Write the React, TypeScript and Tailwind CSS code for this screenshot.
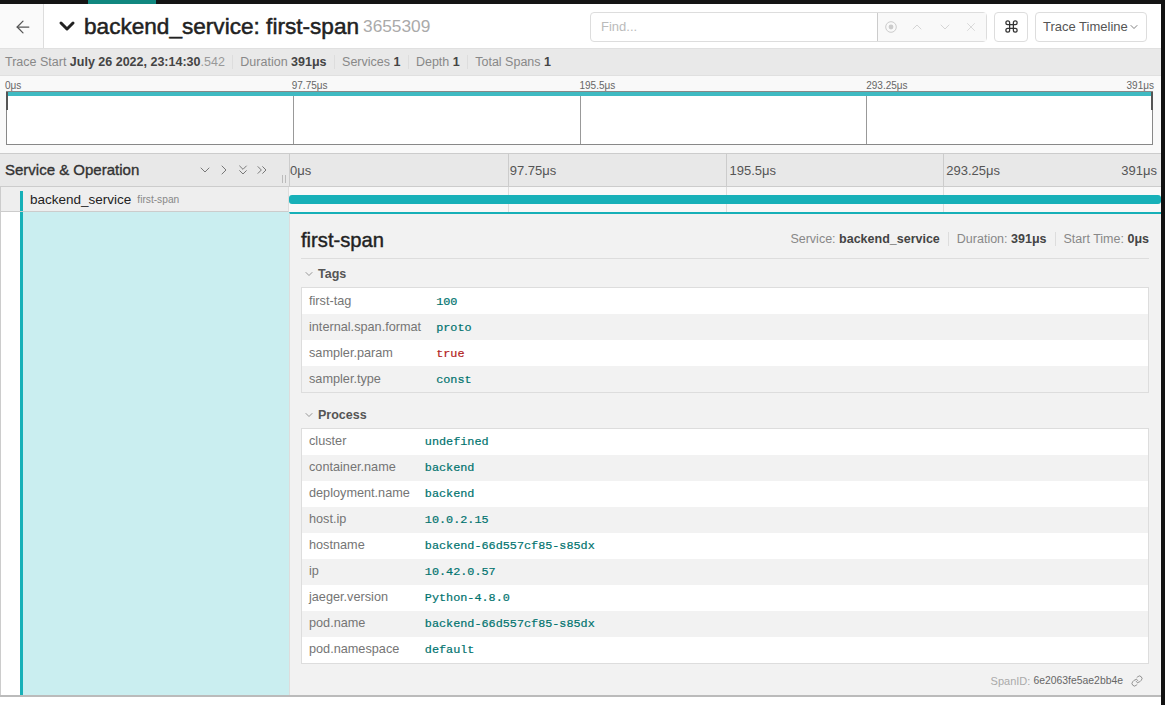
import { ArrowLeft, ChevronDown, ChevronRight, ChevronUp, ChevronsDown, ChevronsRight, Command, Link, X } from "lucide-react";

const tags = [
  { key: "first-tag", value: "100" },
  { key: "internal.span.format", value: "proto" },
  { key: "sampler.param", value: "true", red: true },
  { key: "sampler.type", value: "const" },
];

const process = [
  { key: "cluster", value: "undefined" },
  { key: "container.name", value: "backend" },
  { key: "deployment.name", value: "backend" },
  { key: "host.ip", value: "10.0.2.15" },
  { key: "hostname", value: "backend-66d557cf85-s85dx" },
  { key: "ip", value: "10.42.0.57" },
  { key: "jaeger.version", value: "Python-4.8.0" },
  { key: "pod.name", value: "backend-66d557cf85-s85dx" },
  { key: "pod.namespace", value: "default" },
];

type Row = { key: string; value: string; red?: boolean };

const KeyValues = ({ rows }: { rows: Row[] }) => (
  <div className="border border-[#ddd] bg-white">
    <table className="w-full border-collapse">
      <tbody>
        {rows.map((row, i) => (
          <tr key={row.key} className={`h-[26px] ${i % 2 === 1 ? "bg-[#f2f2f2]" : "bg-white"}`}>
            <td className="w-0 whitespace-nowrap pl-[7px] pr-[15px] text-[12.7px] text-[#757575]">{row.key}</td>
            <td className={`pt-[2px] font-[Liberation_Mono,monospace] text-[11.8px] [-webkit-text-stroke:0.2px] ${row.red ? "text-[#b22222]" : "text-[#00736e]"}`}>
              {row.value}
            </td>
          </tr>
        ))}
      </tbody>
    </table>
  </div>
);

const Stat = ({ label, value, extra, last, tight }: { label: string; value: string; extra?: string; last?: boolean; tight?: boolean }) => (
  <span className={`${last ? "" : tight ? "mr-[7px] border-r border-[#ddd] pr-[7.5px]" : "mr-2 border-r border-[#ddd] pr-2"} leading-[14px]`}>
    <span className="text-[#888]">{label} </span>
    <b className="text-[#444]">{value}</b>
    {extra && <span className="text-[#999]">{extra}</span>}
  </span>
);

const App = () => {
  return (
    <div className="flex h-[705px] w-full overflow-hidden bg-[#111] font-[Liberation_Sans,sans-serif]">
      <div className="flex w-[1161px] flex-col bg-white">
        <div className="h-1 bg-[#151515] pl-[88px]">
          <div className="h-1 w-[68px] bg-[#11877f]" />
        </div>

        <div className="flex h-[44px] items-center">
          <div className="flex h-full w-[44px] items-center justify-center border-r border-[#ddd] bg-[#fafafa] pl-[2px] pt-[1px] text-[#555]">
            <ArrowLeft size={20} strokeWidth={1.5} />
          </div>
          <ChevronDown size={24} strokeWidth={3} className="ml-[11px] text-[#222]" />
          <h1 className="ml-[5px] mt-[2px] text-[22.6px] leading-none text-[#222] [-webkit-text-stroke:0.5px_#222]">backend_service: first-span</h1>
          <span className="ml-[4px] mt-[2px] text-[17.3px] text-[#aaa]">3655309</span>
          <div className="ml-[auto] mt-[1px] flex h-[30px] w-[397px] rounded-[4px] border border-[#ddd]">
            <div className="flex w-[287px] items-center border-r border-[#ccc] pl-[10px] text-[13px] text-[#bbb]">Find...</div>
            <div className="flex flex-1 items-center justify-between bg-[#f9f9f9] pl-[6px] pr-[8px] text-[#ccc]">
              <svg width="14" height="14" viewBox="0 0 14 14" fill="none" stroke="currentColor">
                <circle cx="7" cy="7" r="5.3" />
                <circle cx="7" cy="7" r="2.4" fill="currentColor" stroke="none" />
              </svg>
              <ChevronUp size={16} strokeWidth={1.2} />
              <ChevronDown size={16} strokeWidth={1.2} />
              <X size={14} strokeWidth={1.2} />
            </div>
          </div>
          <div className="ml-[7px] mt-[1px] flex h-[30px] w-[34px] items-center justify-center rounded-[4px] border border-[#ddd] text-[#333]">
            <Command size={15} strokeWidth={2} />
          </div>
          <div className="ml-[7px] mr-[14px] mt-[1px] flex h-[30px] w-[112px] items-center justify-between rounded-[4px] border border-[#ddd] pl-[7px] pr-[6px] text-[13px] text-[#555]">
            Trace Timeline
            <ChevronDown size={12} strokeWidth={1.5} />
          </div>
        </div>

        <div className="flex h-[28px] items-center border-y border-[#e0e0e0] bg-[#e9e9e9] pl-[5px] text-[12.5px]">
          <Stat tight label="Trace Start" value="July 26 2022, 23:14:30" extra=".542" />
          <Stat tight label="Duration" value="391μs" />
          <Stat tight label="Services" value="1" />
          <Stat tight label="Depth" value="1" />
          <Stat tight label="Total Spans" value="1" last />
        </div>

        <div className="h-[77px] bg-[#f9f9f9] pl-[6px] pr-[8px]">
          <div className="grid h-[15px] grid-cols-4 items-center pt-[2px] text-[10px] text-[#666]">
            <span className="-ml-px">0μs</span>
            <span className="-ml-px">97.75μs</span>
            <span>195.5μs</span>
            <span className="flex justify-between">
              293.25μs<span className="mr-[-1px]">391μs</span>
            </span>
          </div>
          <div className="relative h-[54px] border border-[#888] bg-white">
            <div className="h-[4px] bg-[#3fbac2]" />
            <div className="grid h-[48px] grid-cols-4">
              <div />
              <div className="border-l border-[#999]" />
              <div className="border-l border-[#999]" />
              <div className="border-l border-[#999]" />
            </div>
            <div className="absolute -left-px top-0 h-[18px] w-[2px] bg-[#555]" />
            <div className="absolute -right-px top-0 h-[18px] w-[2px] bg-[#555]" />
          </div>
        </div>

        <div className="flex h-[34px] border-y border-[#ccc] bg-[#e8e8e8]">
          <div className="relative flex w-[290px] items-center justify-between border-r border-[#ccc] pl-[5px] pr-[19px]">
            <span className="mt-[1px] text-[15px] text-[#333] [-webkit-text-stroke:0.35px_#333]">Service &amp; Operation</span>
            <div className="flex items-center gap-[3px] text-[#666]">
              <ChevronDown size={16} strokeWidth={1.3} />
              <ChevronRight size={16} strokeWidth={1.3} />
              <ChevronsDown size={16} strokeWidth={1.3} />
              <ChevronsRight size={16} strokeWidth={1.3} />
            </div>
            <div className="absolute bottom-[3px] right-[3px] h-[8px] w-[4px] border-x border-[#bbb]" />
          </div>
          <div className="grid flex-1 grid-cols-4 items-center text-[13px] text-[#555]">
            <span className="h-full leading-[34px]">0μs</span>
            <span className="h-full border-l border-[#ccc] pl-[1px] leading-[34px]">97.75μs</span>
            <span className="h-full border-l border-[#ccc] pl-[3px] leading-[34px]">195.5μs</span>
            <span className="flex h-full justify-between border-l border-[#ccc] pl-[2px] pr-[4px] leading-[34px]">
              293.25μs<span>391μs</span>
            </span>
          </div>
        </div>

        <div className="flex h-[25px]">
          <div className="flex w-[289px] items-stretch border-l border-r border-b border-[#ccc] border-r-[#ddd] bg-[#eee] pl-[19px]">
            <div className="mt-[4px] w-[3px] bg-[#17b0b8]" />
            <span className="ml-[7px] text-[13.5px] leading-[25px] text-[#222]">backend_service</span>
            <span className="ml-[6px] text-[10.2px] leading-[26px] text-[#888]">first-span</span>
          </div>
          <div className="relative flex-1 bg-[#f8f8f8]">
            <div className="ml-px grid h-full grid-cols-4">
              <div />
              <div className="border-l border-[#ddd]" />
              <div className="border-l border-[#ddd]" />
              <div className="border-l border-[#ddd]" />
            </div>
            <div className="absolute left-0 right-0 top-[8px] h-[9px] rounded-[3px] bg-[#17b0b8]" />
          </div>
        </div>

        <div className="flex h-[485px] border-b-2 border-[#bbb]">
          <div className="flex w-[289px] border-l border-[#ccc] pl-[19px]">
            <div className="w-[3px] bg-[#17b0b8]" />
            <div className="flex-1 bg-[#caeef0]" />
          </div>
          <div className="flex flex-1 flex-col border-t-2 border-l border-t-[#17b0b8] border-l-[#ddd] bg-[#f2f2f2] pl-[11px] pr-[12px]">
            <div className="flex h-[45px] shrink-0 items-end justify-between border-b border-[#ddd] pb-[6px]">
              <h2 className="text-[20.2px] leading-[24px] text-[#222] [-webkit-text-stroke:0.4px_#222]">first-span</h2>
              <div className="flex items-center pb-[6px] text-[12.5px]">
                <Stat label="Service:" value="backend_service" />
                <Stat label="Duration:" value="391μs" />
                <Stat label="Start Time:" value="0μs" last />
              </div>
            </div>
            <div className="flex h-[29px] items-center pl-[2px] pt-[2px]">
              <ChevronDown size={12} strokeWidth={1.5} className="text-[#777]" />
              <span className="ml-[3px] text-[12.5px] font-bold text-[#555]">Tags</span>
            </div>
            <KeyValues rows={tags} />
            <div className="flex h-[35px] items-center pl-[2px] pt-[9px]">
              <ChevronDown size={12} strokeWidth={1.5} className="text-[#777]" />
              <span className="ml-[3px] text-[12.5px] font-bold text-[#555]">Process</span>
            </div>
            <KeyValues rows={process} />
            <div className="flex h-[32px] items-center justify-end pr-[6px] pt-[3px] text-[11px]">
              <span className="text-[#aaa]">SpanID:&nbsp;</span>
              <span className="text-[10.4px] text-[#666]">6e2063fe5ae2bb4e</span>
              <Link size={12} strokeWidth={1.2} className="ml-[8px] text-[#555]" />
            </div>
          </div>
        </div>
      </div>
    </div>
  );
};

export default App;
